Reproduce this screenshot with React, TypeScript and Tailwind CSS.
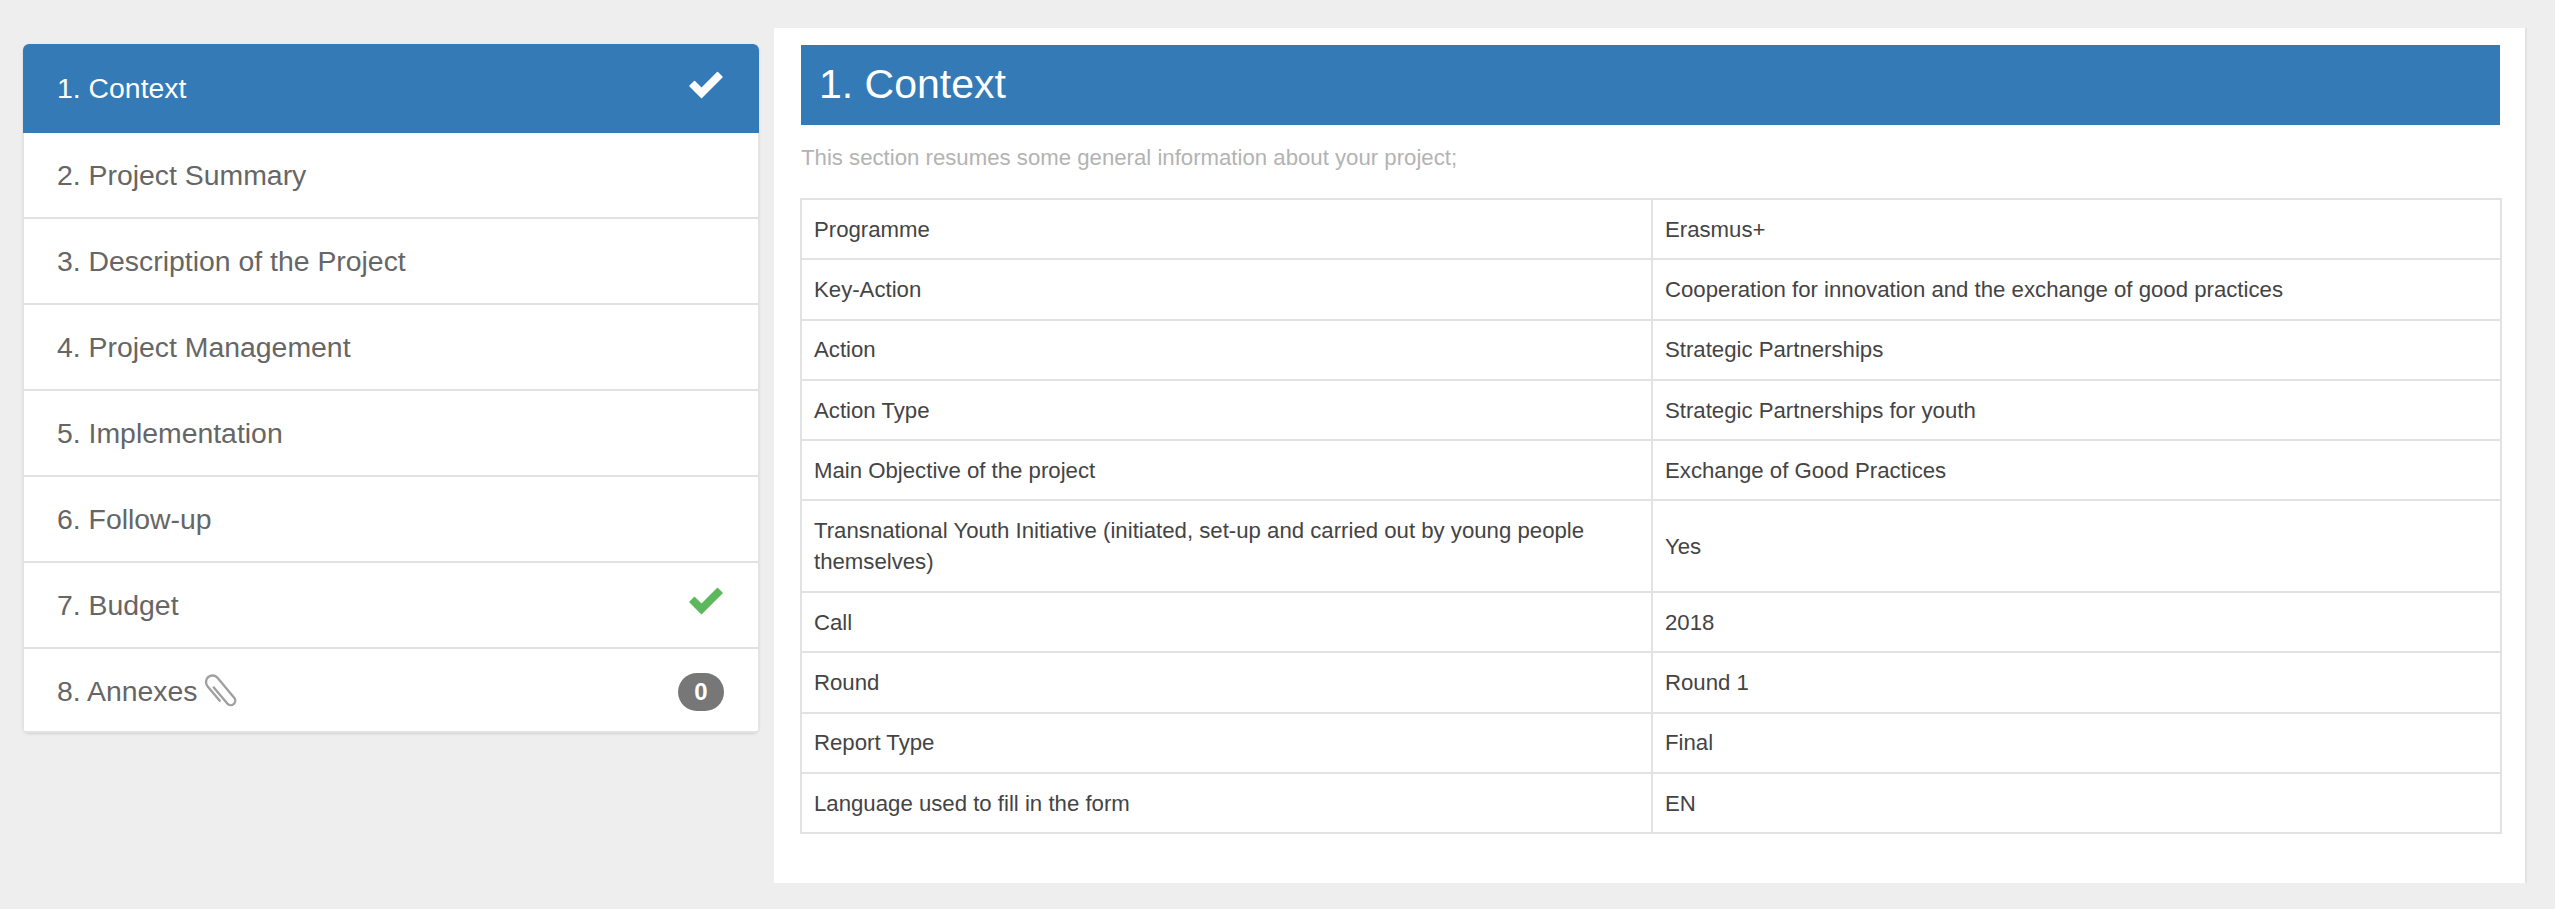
const steps = [
  "1. Context",
  "2. Project Summary",
  "3. Description of the Project",
  "4. Project Management",
  "5. Implementation",
  "6. Follow-up",
  "7. Budget",
  "8. Annexes",
];

const rows: [string, string][] = [
  ["Programme", "Erasmus+"],
  ["Key-Action", "Cooperation for innovation and the exchange of good practices"],
  ["Action", "Strategic Partnerships"],
  ["Action Type", "Strategic Partnerships for youth"],
  ["Main Objective of the project", "Exchange of Good Practices"],
  [
    "Transnational Youth Initiative (initiated, set-up and carried out by young people themselves)",
    "Yes",
  ],
  ["Call", "2018"],
  ["Round", "Round 1"],
  ["Report Type", "Final"],
  ["Language used to fill in the form", "EN"],
];

function Check({ className }: { className: string }) {
  return (
    <svg
      viewBox="0 0 36 28"
      className={className}
      fill="currentColor"
      stroke="currentColor"
      strokeWidth="1.5"
      strokeLinejoin="round"
    >
      <path d="M2 15 L6.5 10.5 L13.5 17.5 L29.5 1.5 L34 6 L13.5 26.5 Z" />
    </svg>
  );
}

function Clip() {
  return (
    <svg
      viewBox="0 0 32 34"
      className="ml-[9px] h-[34px] w-[32px] overflow-visible text-[#a0a0a0]"
      fill="none"
      stroke="currentColor"
      strokeWidth="2.4"
    >
      <g transform="rotate(-40 16 17)">
        <path d="M12 8 V30 A4.5 4.5 0 0 0 21 30 V4 A6.5 6.5 0 0 0 8 4 V24" />
      </g>
    </svg>
  );
}

export default function App() {
  return (
    <div className="flex h-[909px] w-[2555px] items-start bg-[#eeeeee] pl-[23px] pt-[28px] font-['Liberation_Sans',Arial,sans-serif]">
      {/* STEPS */}
      <div className="mt-[16px] w-[736px] overflow-hidden rounded-[6px] bg-white shadow-sm">
        {steps.map((step, i) => (
          <div
            key={step}
            className={
              i === 0
                ? "flex h-[89px] items-center justify-between bg-[#337ab7] pl-[34px] pr-[35px] text-[28.4px] text-white"
                : i === 7
                  ? "flex h-[84px] items-center justify-between border-x border-b-2 border-[#e2e2e2] pl-[33px] pr-[34px] pt-[3px] text-[28.4px] text-[#666666]"
                  : "flex h-[86px] items-center justify-between border-x border-b-2 border-[#e2e2e2] pl-[33px] pr-[34px] text-[28.4px] text-[#666666]"
            }
          >
            <span className="flex items-center">
              {step}
              {i === 7 && <Clip />}
            </span>
            {i === 0 && <Check className="mb-[8px] h-[28px] w-[36px] text-white" />}
            {i === 6 && <Check className="mb-[8px] h-[28px] w-[36px] text-[#5cb85c]" />}
            {i === 7 && (
              <span className="flex h-[38px] w-[46px] items-center justify-center rounded-[19px] bg-[#777777] text-[24px] font-bold text-white">
                0
              </span>
            )}
          </div>
        ))}
      </div>

      {/* CONTENT */}
      <div className="ml-[15px] h-[855px] w-[1753px] border-r-2 border-[#e2e2e2] bg-white px-[27px] pt-[17px]">
        <h1 className="flex h-[80px] w-[1699px] items-center bg-[#337ab7] pl-[18px] text-[41px] text-white">
          1. Context
        </h1>
        <p className="mt-[21px] text-[22.2px] leading-[24px] text-[#b3b3b3]">
          This section resumes some general information about your project;
        </p>
        <table className="-ml-px mt-[28px] w-[1702px] table-fixed border-collapse text-[22.2px] leading-[31px] text-[#444444]">
          <tbody>
            {rows.map(([label, value], i) => (
              <tr key={label} className={i === 5 ? "h-[91.5px]" : "h-[60.3px]"}>
                <td className="w-[851px] border-2 border-[#e2e2e2] px-[12px] py-[13px]">{label}</td>
                <td className="border-2 border-[#e2e2e2] px-[12px] py-[13px]">{value}</td>
              </tr>
            ))}
          </tbody>
        </table>
      </div>
    </div>
  );
}
